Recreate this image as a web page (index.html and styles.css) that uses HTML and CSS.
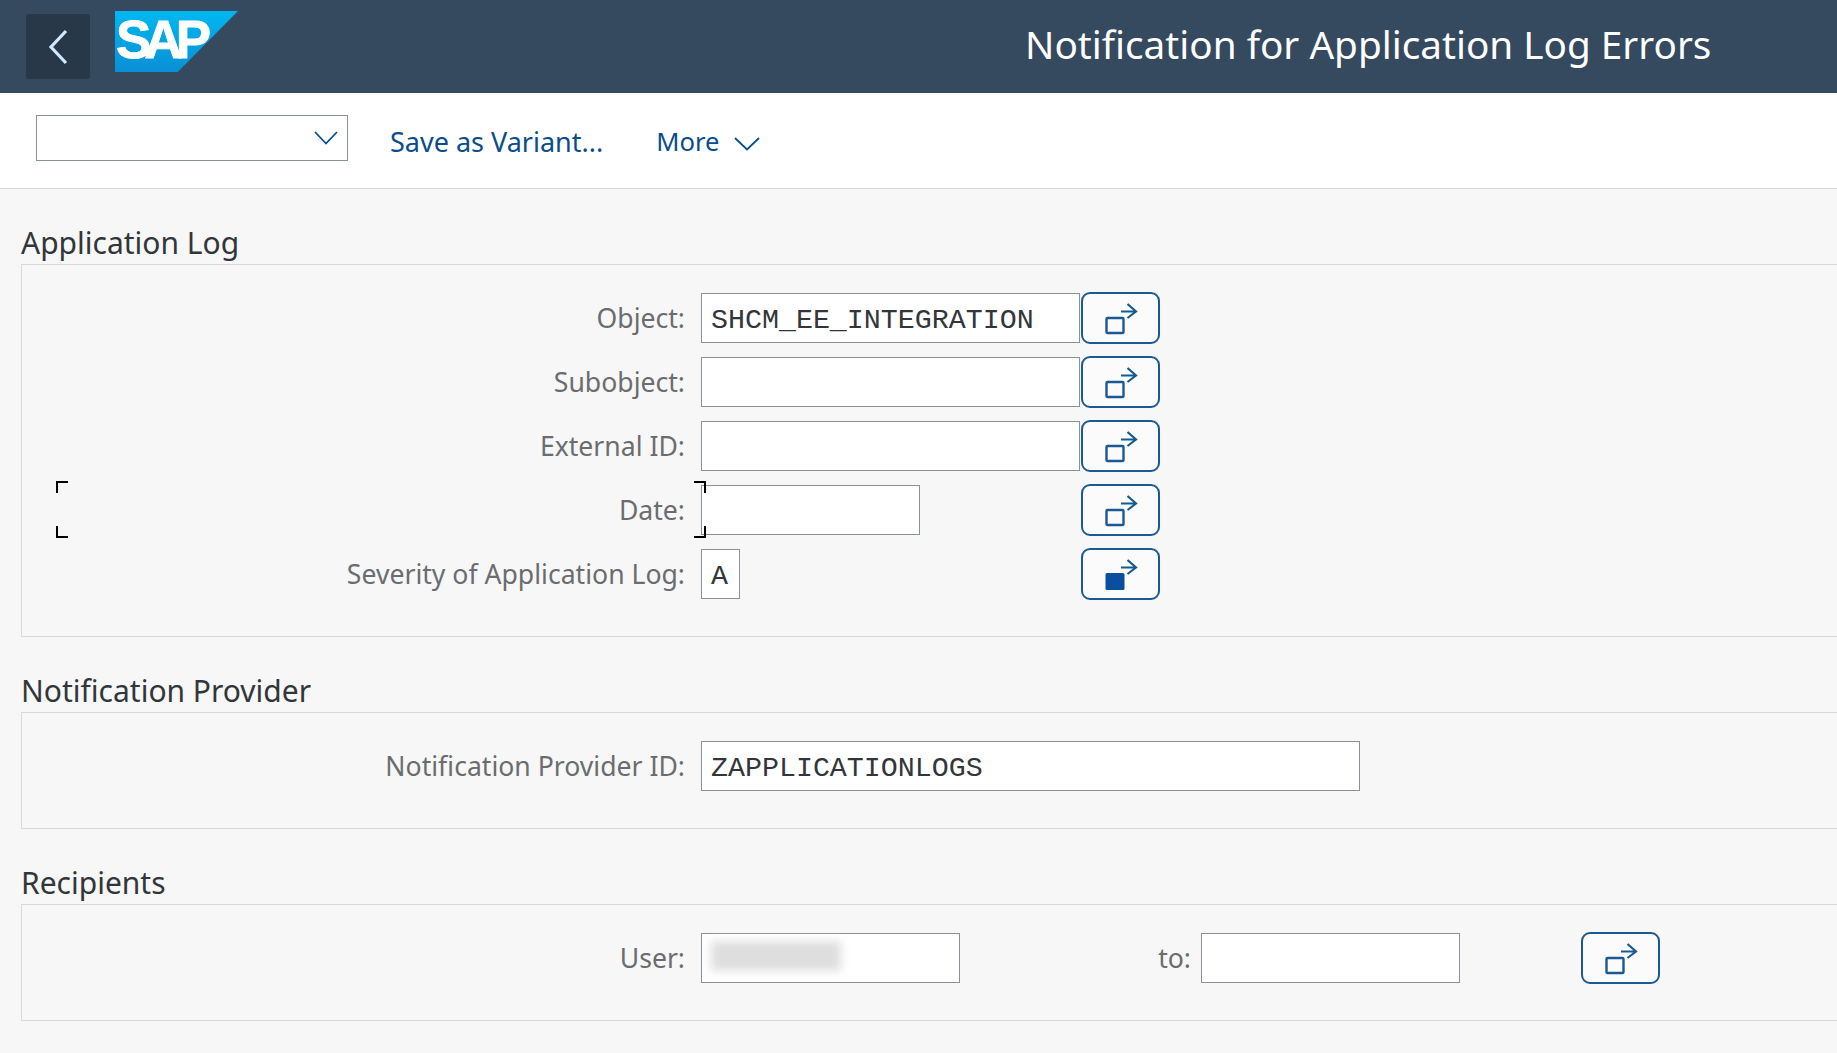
FILE: index.html
```html
<!DOCTYPE html>
<html lang="en">
<head>
    <meta charset="UTF-8">
    <title>Notification for Application Log Errors</title>
    <link rel="stylesheet" href="styles.css">
</head>
<body>
    <header class="shell">
        <button class="back" type="button" aria-label="Back">
            <svg width="22" height="36" viewBox="0 0 22 36"><path d="M19 2 L4 18 L19 34" fill="none" stroke="#d1e8ff" stroke-width="3.2"/></svg>
        </button>
        <div class="logo"><span>SAP</span></div>
        <h1 class="shell-title">Notification for Application Log Errors</h1>
    </header>

    <div class="toolbar">
        <div class="variant">
            <svg width="24" height="14" viewBox="0 0 24 14"><path d="M1 1 L12 12.5 L23 1" fill="none" stroke="#0a4d8c" stroke-width="1.8"/></svg>
        </div>
        <a class="tool-link save-link">Save as Variant...</a>
        <a class="tool-link more-link">More</a>
        <svg class="more-arrow" width="26" height="14" viewBox="0 0 26 14"><path d="M1 1 L13 12.5 L25 1" fill="none" stroke="#0a4d8c" stroke-width="1.8"/></svg>
    </div>

    <main>
        <section>
            <h2>Application Log</h2>
            <div class="panel panel-log">
                <div class="row">
                    <label>Object:</label>
                    <div class="slot"><div class="field field-wide">SHCM_EE_INTEGRATION</div></div>
                    <button class="multi" type="button"><svg width="36" height="36" viewBox="0 0 36 36"><rect x="3.5" y="18" width="17" height="15" rx="1" fill="none" stroke="#1a5a94" stroke-width="2.4"/><path d="M18 11.5 H33 M24.5 4 L33 11.5 L24.5 18" fill="none" stroke="#1a5a94" stroke-width="2.2"/></svg></button>
                </div>
                <div class="row">
                    <label>Subobject:</label>
                    <div class="slot"><div class="field field-wide"></div></div>
                    <button class="multi" type="button"><svg width="36" height="36" viewBox="0 0 36 36"><rect x="3.5" y="18" width="17" height="15" rx="1" fill="none" stroke="#1a5a94" stroke-width="2.4"/><path d="M18 11.5 H33 M24.5 4 L33 11.5 L24.5 18" fill="none" stroke="#1a5a94" stroke-width="2.2"/></svg></button>
                </div>
                <div class="row">
                    <label>External ID:</label>
                    <div class="slot"><div class="field field-wide"></div></div>
                    <button class="multi" type="button"><svg width="36" height="36" viewBox="0 0 36 36"><rect x="3.5" y="18" width="17" height="15" rx="1" fill="none" stroke="#1a5a94" stroke-width="2.4"/><path d="M18 11.5 H33 M24.5 4 L33 11.5 L24.5 18" fill="none" stroke="#1a5a94" stroke-width="2.2"/></svg></button>
                </div>
                <div class="row row-date">
                    <label>Date:</label>
                    <div class="slot"><div class="field field-date"></div></div>
                    <button class="multi" type="button"><svg width="36" height="36" viewBox="0 0 36 36"><rect x="3.5" y="18" width="17" height="15" rx="1" fill="none" stroke="#1a5a94" stroke-width="2.4"/><path d="M18 11.5 H33 M24.5 4 L33 11.5 L24.5 18" fill="none" stroke="#1a5a94" stroke-width="2.2"/></svg></button>
                    <div class="focus-frame">
                        <i class="corner tl"></i><i class="corner tr"></i><i class="corner bl"></i><i class="corner br"></i>
                    </div>
                </div>
                <div class="row">
                    <label>Severity of Application Log:</label>
                    <div class="slot"><div class="field field-char">A</div></div>
                    <button class="multi" type="button"><svg width="36" height="36" viewBox="0 0 36 36"><rect x="2.5" y="17" width="19" height="17" rx="1.5" fill="#0a4f9e"/><path d="M18 11.5 H33 M24.5 4 L33 11.5 L24.5 18" fill="none" stroke="#1a5a94" stroke-width="2.2"/></svg></button>
                </div>
            </div>
        </section>

        <section>
            <h2>Notification Provider</h2>
            <div class="panel">
                <div class="row">
                    <label>Notification Provider ID:</label>
                    <div class="field field-provider">ZAPPLICATIONLOGS</div>
                </div>
            </div>
        </section>

        <section>
            <h2>Recipients</h2>
            <div class="panel">
                <div class="row">
                    <label>User:</label>
                    <div class="field field-user"><div class="blurred"></div></div>
                    <label class="to-label">to:</label>
                    <div class="field field-user"></div>
                    <button class="multi multi-user" type="button"><svg width="36" height="36" viewBox="0 0 36 36"><rect x="3.5" y="18" width="17" height="15" rx="1" fill="none" stroke="#1a5a94" stroke-width="2.4"/><path d="M18 11.5 H33 M24.5 4 L33 11.5 L24.5 18" fill="none" stroke="#1a5a94" stroke-width="2.2"/></svg></button>
                </div>
            </div>
        </section>
    </main>
</body>
</html>
```

FILE: styles.css
```css
html, body {
    height: 100%;
}
body {
    margin: 0;
    background: #f7f7f7;
    font-family: "Noto Sans", Arial, sans-serif;
    overflow: hidden;
}

/* shell bar */
.shell {
    display: flex;
    align-items: flex-start;
    height: 93px;
    background: #354a5f;
}
.back {
    display: flex;
    align-items: center;
    justify-content: center;
    width: 64px;
    height: 65px;
    margin: 14px 0 0 26px;
    padding: 0;
    border: none;
    border-radius: 3px;
    background: #283848;
}
.logo {
    width: 123px;
    height: 61px;
    margin: 11px 0 0 25px;
    background: linear-gradient(#00b8f1, #0a8fd6);
    clip-path: polygon(0 0, 100% 0, 51% 100%, 0 100%);
    overflow: hidden;
}
.logo span {
    display: block;
    margin-left: 1px;
    color: #fff;
    font: bold 53px/58px "Liberation Sans", Arial, sans-serif;
    letter-spacing: -7px;
    -webkit-text-stroke: 0.8px #fff;
}
.shell-title {
    margin: 0 0 0 787px;
    color: #fff;
    font-size: 38.7px;
    font-weight: 400;
    line-height: 88px;
    white-space: nowrap;
}

/* toolbar */
.toolbar {
    display: flex;
    align-items: center;
    height: 96px;
    box-sizing: border-box;
    padding-left: 36px;
    background: #fff;
    border-bottom: 1px solid #d9d9d9;
}
.variant {
    display: flex;
    align-items: center;
    justify-content: flex-end;
    width: 312px;
    height: 46px;
    box-sizing: border-box;
    margin-top: -5px;
    padding-right: 9px;
    background: #fff;
    border: 1px solid #89919a;
}
.tool-link {
    margin-top: 2px;
    color: #0a4d8c;
    font-size: 27px;
}
.save-link {
    margin-left: 42px;
    margin-right: 53px;
}
.more-link {
    font-size: 25.6px;
}
.more-arrow {
    margin: 6px 0 0 15px;
}

/* sections */
section {
    padding: 36px 0 0 21px;
}
h2 {
    margin: 0;
    color: #32363a;
    font-size: 30px;
    font-weight: 400;
    line-height: 35px;
    height: 39px;
}
.panel {
    padding: 28px 0 37px;
    border: 1px solid #d9d9d9;
    border-right: none;
}
.row {
    position: relative;
    display: flex;
    align-items: center;
    height: 50px;
}
.panel-log .row + .row {
    margin-top: 14px;
}
label {
    width: 663px;
    padding-right: 16px;
    color: #6a6d70;
    font-size: 26.6px;
    text-align: right;
    white-space: nowrap;
}
.slot {
    width: 380px;
}

/* input fields */
.field {
    height: 50px;
    box-sizing: border-box;
    padding: 0 9px;
    background: #fff;
    border: 1px solid #89919a;
    color: #32363a;
    font-family: "Liberation Mono", monospace;
    font-size: 28.3px;
    line-height: 52px;
}
.field-wide {
    width: 379px;
}
.field-date {
    width: 219px;
}
.field-char {
    width: 39px;
}
.field-provider {
    width: 659px;
}
.field-user {
    width: 259px;
}
.blurred {
    width: 130px;
    height: 30px;
    margin-top: 7px;
    background: #dedede;
    filter: blur(5px);
}
.to-label {
    width: 231px;
    padding-right: 10px;
}

/* multiple selection buttons */
.multi {
    display: flex;
    align-items: center;
    justify-content: center;
    width: 79px;
    height: 52px;
    padding: 0;
    background: #fbfbfb;
    border: 2.5px solid #1a5a94;
    border-radius: 9px;
}
.multi-user {
    margin-left: 121px;
}

/* focus corners round the date row */
.focus-frame {
    position: absolute;
    top: -4px;
    left: 34px;
    width: 650px;
    height: 57px;
    pointer-events: none;
}
.corner {
    position: absolute;
    width: 10px;
    height: 10px;
    border: 0 solid #000;
}
.tl { top: 0; left: 0; border-width: 2px 0 0 2px; }
.tr { top: 0; right: 0; border-width: 2px 2px 0 0; }
.bl { bottom: 0; left: 0; border-width: 0 0 2px 2px; }
.br { bottom: 0; right: 0; border-width: 0 2px 2px 0; }
```
